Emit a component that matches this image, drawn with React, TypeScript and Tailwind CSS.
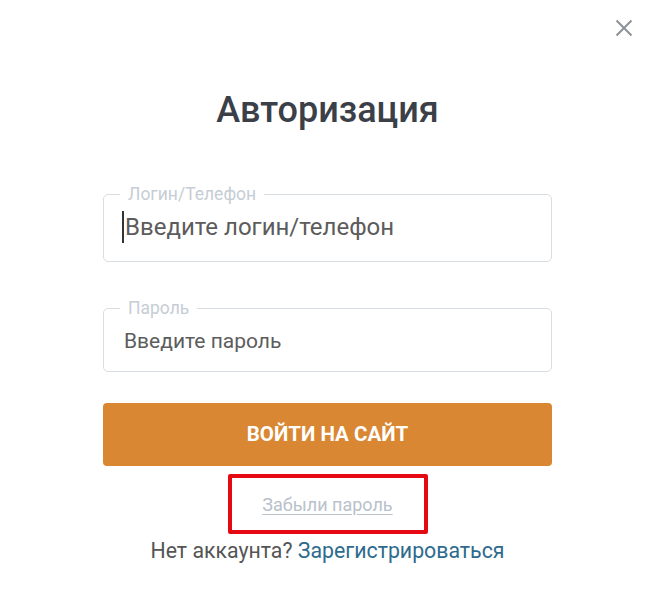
import React from "react";

export default function App() {
  return (
    <div className="relative min-h-[609px] bg-white font-['Roboto',_sans-serif]">
      {/* close */}
      <button className="absolute right-[22px] top-[19px] p-0 text-[#8d939b]" aria-label="Закрыть">
        <svg width="18" height="18" viewBox="0 0 18 18" fill="none" stroke="currentColor" strokeWidth="2">
          <path d="M1.5 1.5L16.5 16.5M16.5 1.5L1.5 16.5" />
        </svg>
      </button>

      <div className="mx-auto w-[449px] pt-[89px] flex flex-col">
        <h1 className="text-center text-[36px] leading-[42px] font-medium text-[#3b4048]">
          Авторизация
        </h1>

        <fieldset className="mt-[54px] border border-[#d7dde3] rounded-[5px] pl-[16px] pr-[16px] pt-[4px] pb-[14px]">
          <legend className="px-[8px] text-[17.5px] leading-[18px] text-[#c6cdd5]">Логин/Телефон</legend>
          <div className="flex items-center h-[40px]">
            <span className="w-[2px] h-[32px] bg-[#333] mr-[1px] ml-[2px]" />
            <input
              className="flex-1 outline-none text-[24px] text-[#555] placeholder:text-[#5c5c5c] bg-transparent"
              placeholder="Введите логин/телефон"
            />
          </div>
        </fieldset>

        <fieldset className="mt-[37px] border border-[#d7dde3] rounded-[5px] pl-[16px] pr-[16px] pb-[14px]">
          <legend className="px-[8px] text-[17.5px] leading-[18px] text-[#c6cdd5]">Пароль</legend>
          <input
            type="password"
            className="w-full h-[40px] pl-[4px] pt-[8px] outline-none text-[21px] text-[#555] placeholder:text-[#5c5c5c] bg-transparent"
            placeholder="Введите пароль"
          />
        </fieldset>

        <button className="mt-[31px] h-[63px] rounded-[4px] bg-[#d98733] text-white text-[20.5px] font-bold uppercase">
          Войти на сайт
        </button>

        <div className="mt-[8px] self-center w-[200px] h-[60px] border-[4px] border-[#e50914] rounded-[2px] flex items-center justify-center">
          <a href="#" className="text-[18px] text-[#b9c1cb] underline underline-offset-[3px]">
            Забыли пароль
          </a>
        </div>

        <p className="mt-[3px] text-center text-[21.3px] leading-[28px] text-[#555]">
          Нет аккаунта? <a href="#" className="text-[#2d6b8e]">Зарегистрироваться</a>
        </p>
      </div>
    </div>
  );
}
